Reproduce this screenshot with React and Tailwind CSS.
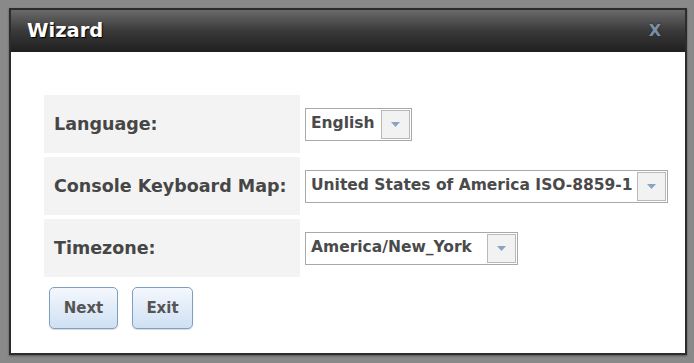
import { useState } from "react"

const font = { fontFamily: '"DejaVu Sans", Verdana, sans-serif' }

function Select({ value, width }) {
  return (
    <div className={`flex h-[33px] items-stretch border border-[#a9a9a9] bg-white ${width}`}>
      <div className="flex flex-1 items-center whitespace-nowrap pl-[5px] pr-[4px] text-[15.5px] font-bold text-[#4a4a4a]">
        {value}
      </div>
      <div className="my-[1px] mr-[1px] flex w-[29px] items-center justify-center border border-[#b9b9b9] bg-[#f2f2f2]">
        <svg width="11" height="7" viewBox="0 0 11 7">
          <path d="M1 1 L10 1 L5.5 6 Z" fill="#8aa3c4" />
        </svg>
      </div>
    </div>
  )
}

function Row({ label, children }) {
  return (
    <div className="flex h-[58px]">
      <div className="flex w-[256px] items-center whitespace-nowrap bg-[#f3f3f3] pl-[10px] text-[17.5px] font-bold text-[#464646]">
        {label}
      </div>
      <div className="flex flex-1 items-center pl-[5px]">{children}</div>
    </div>
  )
}

export default function App() {
  const [open] = useState(true)

  return (
    <div className="h-[363px] w-[694px] bg-[#898989] pl-[9px] pt-[8px]" style={font}>
      {open && (
        <div className="flex h-[347px] w-[678px] flex-col border-2 border-[#2c2c2c] bg-white shadow-[0_1px_2px_rgba(0,0,0,0.4)]">
          <div className="flex h-[42px] items-center justify-between bg-gradient-to-b from-[#6a6a6a] via-[#3a3a3a] to-[#1f1f1f] pl-[16px] pr-[24px]">
            <span className="text-[19.5px] font-bold text-white [text-shadow:1px_1px_1px_#000]">Wizard</span>
            <span className="text-[16px] font-bold text-[#7d8fa6] [text-shadow:0_0_2px_#222]">X</span>
          </div>
          <div className="flex flex-col pl-[33px] pr-[16px] pt-[43px]">
            <div className="flex flex-col gap-[4px]">
              <Row label="Language:">
                <Select value="English" width="w-[107px]" />
              </Row>
              <Row label="Console Keyboard Map:">
                <Select value="United States of America ISO-8859-1" width="w-[363px]" />
              </Row>
              <Row label="Timezone:">
                <Select value="America/New_York" width="w-[213px]" />
              </Row>
            </div>
            <div className="mt-[10px] flex gap-[14px] pl-[5px]">
              <button className="h-[42px] w-[69px] rounded-[5px] border border-[#7f9fc2] bg-gradient-to-b from-[#f4f8fd] to-[#cfe0f3] text-[15px] font-bold text-[#555] shadow-[0_1px_1px_rgba(0,0,0,0.15)]">
                Next
              </button>
              <button className="h-[42px] w-[61px] rounded-[5px] border border-[#7f9fc2] bg-gradient-to-b from-[#f4f8fd] to-[#cfe0f3] text-[15px] font-bold text-[#555] shadow-[0_1px_1px_rgba(0,0,0,0.15)]">
                Exit
              </button>
            </div>
          </div>
        </div>
      )}
    </div>
  )
}
